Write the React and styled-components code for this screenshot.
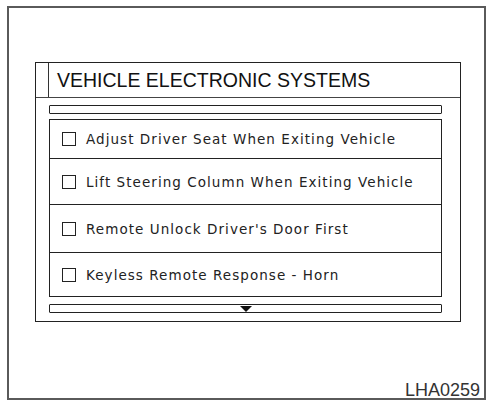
import React from "react";
import styled, { createGlobalStyle } from "styled-components";

const GlobalStyle = createGlobalStyle`
	html, body {
		margin: 0;
		padding: 0;
		background: #fff;
	}
	* {
		box-sizing: border-box;
	}
`;

const items = [
	{ label: "Adjust Driver Seat When Exiting Vehicle", height: 39 },
	{ label: "Lift Steering Column When Exiting Vehicle", height: 46 },
	{ label: "Remote Unlock Driver's Door First", height: 48 },
	{ label: "Keyless Remote Response - Horn", height: 44 }
];

const App = () => (
	<>
		<GlobalStyle />
		<Frame>
			<Panel>
				<Header>
					<HeaderTab />
					<Title>VEHICLE ELECTRONIC SYSTEMS</Title>
				</Header>
				<Body>
					<ScrollBar />
					<List>
						{ items.map((item) => (
							<Row key={ item.label } $height={ item.height }>
								<CheckBox />
								<Label>{ item.label }</Label>
							</Row>
						)) }
					</List>
					<ScrollBar $down>
						<svg width="12" height="6" viewBox="0 0 12 6">
							<polygon points="0,0 12,0 6,6" fill="#111" />
						</svg>
					</ScrollBar>
				</Body>
			</Panel>
			<Caption>LHA0259</Caption>
		</Frame>
	</>
);

const Frame = styled.div`
	display: flex;
	flex-direction: column;
	width: 479px;
	height: 394px;
	margin: 6px 0 0 7px;
	padding: 54px 0 0 26px;
	border: 2px solid #5a5a5a;
`;

const Panel = styled.div`
	display: flex;
	flex-direction: column;
	width: 426px;
	height: 260px;
	border: 1px solid #222;
`;

const Header = styled.div`
	display: grid;
	grid-template-columns: 13px 1fr;
	height: 35px;
	border-bottom: 1px solid #444;
`;

const HeaderTab = styled.div`
	border-right: 1px solid #333;
`;

const Title = styled.div`
	display: flex;
	align-items: center;
	padding: 1px 0 0 8px;
	font-family: "Liberation Sans", Arial, sans-serif;
	font-size: 19.5px;
	color: #111;
`;

const Body = styled.div`
	display: flex;
	flex-direction: column;
	padding: 7px 18px 0 13px;
`;

const ScrollBar = styled.div`
	display: flex;
	justify-content: center;
	align-items: flex-start;
	height: 9px;
	margin-top: ${({ $down }) => ($down ? "7px" : "0")};
	padding-top: 1px;
	border: 1.5px solid #222;
	border-radius: 1px;
`;

const List = styled.div`
	display: flex;
	flex-direction: column;
	height: 178px;
	margin-top: 5px;
	border: 1.5px solid #222;
`;

const Row = styled.div`
	display: flex;
	align-items: center;
	height: ${({ $height }) => $height}px;
	padding-left: 12px;
	border-bottom: 1.5px solid #222;

	&:last-child {
		border-bottom: none;
		flex: 1;
	}
`;

const CheckBox = styled.span`
	flex: none;
	width: 14px;
	height: 14px;
	border: 1.5px solid #222;
`;

const Label = styled.span`
	margin-left: 10px;
	font-family: "DejaVu Sans", Verdana, sans-serif;
	font-size: 13.5px;
	letter-spacing: 1.05px;
	color: #222;
`;

const Caption = styled.div`
	margin-top: auto;
	padding: 0 4px 0 0;
	text-align: right;
	font-family: "Liberation Sans", Arial, sans-serif;
	font-size: 18px;
	line-height: 15px;
	color: #333;
`;

export default App;
